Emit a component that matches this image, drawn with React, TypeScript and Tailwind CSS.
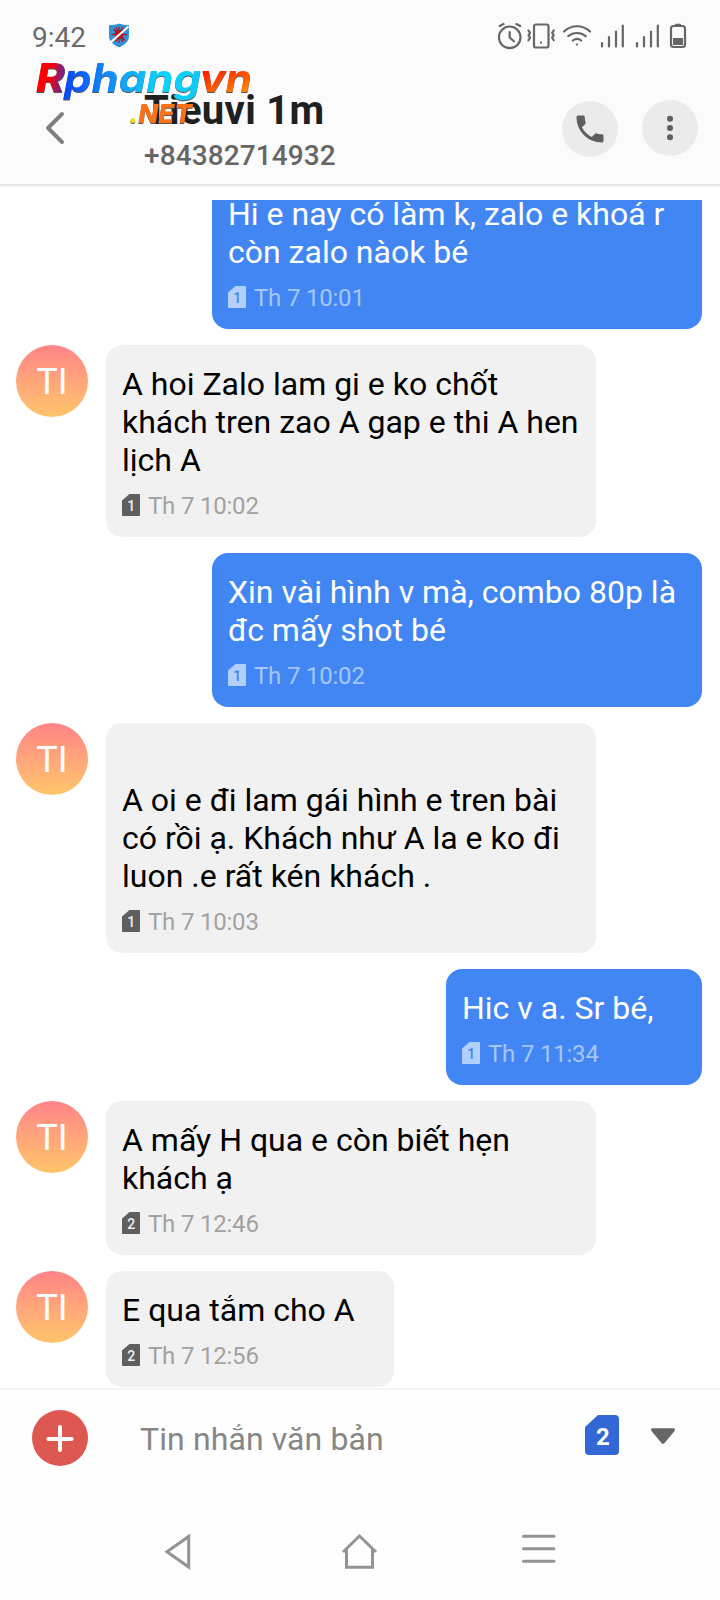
type Message = {
  text: string;
  time: string;
  sim: number;
  mine: boolean;
  width: string;
};

const messages: Message[] = [
  {
    text: "Hi e nay có làm k, zalo e khoá r\ncòn zalo nàok bé",
    time: "Th 7 10:01",
    sim: 1,
    mine: true,
    width: "w-[490px]",
  },
  {
    text: "A hoi Zalo lam gi e ko chốt\nkhách tren zao A gap e thi A hen\nlịch A",
    time: "Th 7 10:02",
    sim: 1,
    mine: false,
    width: "w-[490px]",
  },
  {
    text: "Xin vài hình v mà, combo 80p là\nđc mấy shot bé",
    time: "Th 7 10:02",
    sim: 1,
    mine: true,
    width: "w-[490px]",
  },
  {
    text: "\nA oi e đi lam gái hình e tren bài\ncó rồi ạ. Khách như A la e ko đi\nluon .e rất kén khách .",
    time: "Th 7 10:03",
    sim: 1,
    mine: false,
    width: "w-[490px]",
  },
  {
    text: "Hic v a. Sr bé,",
    time: "Th 7 11:34",
    sim: 1,
    mine: true,
    width: "w-[256px]",
  },
  {
    text: "A mấy H qua e còn biết hẹn\nkhách ạ",
    time: "Th 7 12:46",
    sim: 2,
    mine: false,
    width: "w-[490px]",
  },
  {
    text: "E qua tắm cho A",
    time: "Th 7 12:56",
    sim: 2,
    mine: false,
    width: "w-[288px]",
  },
];

const ShieldIcon = () => (
  <svg className="ml-[21px] mt-[22px]" width="24" height="27" viewBox="0 0 24 27">
    <path
      d="M12 1c3 1.200 6.500 1.600 10.500 1.600V14c0 5.500-4.500 9-10.500 12C6 23 1.500 19.500 1.500 14V2.600C5.500 2.600 9 2.200 12 1z"
      fill="#3290d8"
      stroke="#fff"
      strokeWidth="1"
    />
    <g stroke="#a3121c" strokeWidth="1.200" strokeLinecap="round">
      <path d="M12 5v15M5 12.500h14.500M7 7.500l10.500 10.500M17.500 7L7 18M9 5.500l6.500 14M15.500 5.500L9 19.500" />
    </g>
    <circle cx="12" cy="12.500" r="4.600" fill="#b5121b" />
    <path d="M3.500 20.500L21.500 4.500" stroke="#fff" strokeWidth="2.200" />
  </svg>
);

const StatusIcons = () => (
  <svg
    className="ml-auto mr-[32px] mt-[22px]"
    width="190"
    height="28"
    viewBox="498 22 190 28"
    fill="none"
    stroke="#666"
    strokeWidth="2.200"
    strokeLinecap="round"
    strokeLinejoin="round"
  >
    {/* alarm */}
    <circle cx="509.700" cy="37.300" r="10.800" />
    <path d="M509.700 32v5.500l4.200 3.800M499.700 26l3.800-1.900M520.200 26l-3.800-1.900" />
    {/* vibrate */}
    <rect x="534" y="24.500" width="14.500" height="23" rx="2" />
    <path d="M541 42.500v.2M528.500 30.500l1.500 2.400-1.500 2.400 1.500 2.400-1.500 2.600M553.700 30.500l-1.500 2.400 1.500 2.400-1.500 2.400 1.500 2.600" />
    {/* wifi */}
    <path d="M564 31.500c7.500-7 18.500-7 26 0M568.300 36.200c5-4.300 12.400-4.300 17.400 0M572.800 40.500c2.600-2 5.800-2 8.400 0M577 44.500v.1" />
    {/* signal */}
    <path d="M602 43v3.500M609 37v9.500M616 31.500v15M622.800 25.500v21M637 43v3.500M644 37v9.500M651 31.500v15M657.800 25.500v21" />
    {/* battery */}
    <rect x="671" y="26" width="14" height="21" rx="2.500" />
    <path d="M676 24.800h4" />
    <path d="M673 38h10v7h-10z" fill="#666" stroke="none" />
  </svg>
);

const Watermark = () => (
  <svg
    className="absolute left-[30px] top-[56px]"
    width="230"
    height="74"
    viewBox="30 56 230 74"
    fontFamily="Inter, 'Liberation Sans', sans-serif"
    fontWeight="700"
    fontStyle="italic"
  >
    <defs>
      <linearGradient id="wm-r" x1="0" x2="1" y1="0" y2="0.200">
        <stop offset="0.550" stopColor="#fb0007" />
        <stop offset="1" stopColor="#5a2ba0" />
      </linearGradient>
      <linearGradient id="wm-phang" x1="0" x2="1">
        <stop offset="0" stopColor="#0a45f5" />
        <stop offset="0.450" stopColor="#12a4fb" />
        <stop offset="0.700" stopColor="#08d4fc" />
        <stop offset="1" stopColor="#13c9f5" />
      </linearGradient>
      <linearGradient id="wm-vn" x1="0" x2="0.400" y1="0" y2="1">
        <stop offset="0.300" stopColor="#fb1500" />
        <stop offset="1" stopColor="#ff8a00" />
      </linearGradient>
    </defs>
    <g style={{ filter: "drop-shadow(0.5px 1px 0 #555)" }}>
      <text x="36" y="92" fontSize="39" fontWeight="800" textLength="29" lengthAdjust="spacingAndGlyphs" fill="url(#wm-r)">
        R
      </text>
      <text x="64" y="92" fontSize="39" textLength="137" lengthAdjust="spacingAndGlyphs" fill="url(#wm-phang)">
        phang
      </text>
      <text x="200" y="92" fontSize="38" textLength="52" lengthAdjust="spacingAndGlyphs" fill="url(#wm-vn)">
        vn
      </text>
      <text x="129" y="122.500" fontSize="26" fontWeight="800" textLength="63" lengthAdjust="spacingAndGlyphs" fill="#fb7216">
        <tspan fill="#f3dc10">.</tspan>NET
      </text>
    </g>
  </svg>
);

const SimIcon = ({ sim, mine }: { sim: number; mine: boolean }) => (
  <svg className="-mt-0.5" width="18" height="22" viewBox="0 0 18 22">
    <path
      d="M7.500 0H17q1 0 1 1v20q0 1-1 1H1q-1 0-1-1V6.500z"
      fill={mine ? "#b3cffb" : "#5f5f5f"}
    />
    <text
      x="9.200"
      y="16.500"
      textAnchor="middle"
      fontSize="14"
      fontWeight="500"
      fill={mine ? "#4286f3" : "#f1f1f1"}
    >
      {sim}
    </text>
  </svg>
);

const Bubble = ({ message }: { message: Message }) => {
  const { text, time, sim, mine, width } = message;
  return (
    <div className={mine ? "flex shrink-0 justify-end" : "flex shrink-0"}>
      {!mine && (
        <div className="mr-[18px] flex h-[72px] w-[72px] items-center justify-center rounded-full bg-linear-to-b from-[#ff8387] to-[#ffc569] pt-0.5 text-[36px] leading-none text-white">
          TI
        </div>
      )}
      <div
        className={`${width} rounded-[16px] px-4 pt-5 pb-[17px] ${
          mine ? "bg-[#4286f3] text-white" : "bg-[#f1f1f1] text-black"
        }`}
      >
        <p className="whitespace-pre text-[32px] leading-[38px]">{text}</p>
        <div className="mt-[13px] flex h-7 items-center gap-2">
          <SimIcon sim={sim} mine={mine} />
          <span
            className={`text-[24px] leading-7 tracking-[-0.2px] ${
              mine ? "text-[#a6c6fa]" : "text-[#a2a2a2]"
            }`}
          >
            {time}
          </span>
        </div>
      </div>
    </div>
  );
};

const App = () => {
  return (
    <main className="relative flex h-[1600px] w-[720px] flex-col overflow-hidden bg-white font-['Roboto','Noto_Sans',sans-serif]">
      <header className="h-[184px] shrink-0 bg-[#fbfbfb]">
        <div className="flex h-[84px] pl-[32px]">
          <span className="mt-[21px] text-[28px] leading-[34px] text-[#6b6b6b]">
            9:42
          </span>
          <ShieldIcon />
          <StatusIcons />
        </div>
        <div className="flex h-[100px]">
          <svg
            className="ml-[44px] mt-[26px]"
            width="22"
            height="36"
            viewBox="0 0 22 36"
            fill="none"
            stroke="#808080"
            strokeWidth="4"
            strokeLinecap="round"
            strokeLinejoin="round"
          >
            <path d="M18 4L4 18l14 14" />
          </svg>
          <div className="ml-[78px] flex-1">
            <h1 className="mt-1 text-[40px] font-bold leading-[46px] tracking-[0.3px] text-[#202020]">
              Tieuvi 1m
            </h1>
            <p className="mt-[5px] text-[28px] font-medium leading-[34px] tracking-[0.1px] text-[#666]">
              +84382714932
            </p>
          </div>
          <div className="mr-[22px] mt-4 flex gap-6">
            <button className="mt-px flex h-14 w-14 items-center justify-center rounded-full bg-[#ebebeb]">
              <svg width="36" height="36" viewBox="0 0 24 24" fill="#5f5f5f">
                <path d="M6.620 10.790c1.440 2.830 3.760 5.140 6.590 6.590l2.200-2.200c.27-.27.67-.36 1.020-.24 1.120.37 2.330.57 3.570.57.55 0 1 .45 1 1V20c0 .55-.45 1-1 1-9.390 0-17-7.610-17-17 0-.55.45-1 1-1h3.500c.55 0 1 .45 1 1 0 1.250.2 2.450.57 3.570.11.35.03.74-.25 1.020l-2.200 2.200z" />
              </svg>
            </button>
            <button className="flex h-14 w-14 items-center justify-center rounded-full bg-[#ebebeb]">
              <svg width="8" height="28" viewBox="0 0 8 28" fill="#5f5f5f">
                <circle cx="4" cy="4.700" r="3" />
                <circle cx="4" cy="14" r="3" />
                <circle cx="4" cy="23.300" r="3" />
              </svg>
            </button>
          </div>
        </div>
      </header>
      <div className="h-[3px] shrink-0 bg-linear-to-b from-[#dedede] to-[#f6f6f6]" />

      <section className="mt-[13px] flex h-[1188px] shrink-0 flex-col justify-end gap-4 overflow-hidden pb-px pl-4 pr-[18px]">
        {messages.map((message, i) => (
          <Bubble key={i} message={message} />
        ))}
      </section>

      <footer className="flex-1 border-t-2 border-[#f5f5f5] bg-[#fefefe]">
        <div className="flex h-24 items-center">
          <button className="ml-8 flex h-14 w-14 items-center justify-center rounded-full bg-[#dd5850]">
            <svg
              width="28"
              height="28"
              viewBox="0 0 28 28"
              stroke="#fff"
              strokeWidth="4"
              strokeLinecap="round"
            >
              <path d="M14 3v23M2.500 15h23" />
            </svg>
          </button>
          <span className="ml-[52px] mt-0.5 flex-1 text-[32px] leading-[38px] tracking-[0.1px] text-[#868686]">
            Tin nhắn văn bản
          </span>
          <svg className="-mt-[6px]" width="34" height="40" viewBox="0 0 34 40">
            <path
              d="M13 0h17q4 0 4 4v32q0 4-4 4H4q-4 0-4-4V12z"
              fill="#3367d6"
            />
            <text
              x="18"
              y="29.500"
              textAnchor="middle"
              fontSize="24"
              fontWeight="700"
              fill="#fff"
            >
              2
            </text>
          </svg>
          <svg className="-mt-1 ml-8 mr-[45px]" width="24" height="16" viewBox="0 0 24 16">
            <path
              d="M1 1h22v1.500L12.500 15h-1L1 2.500z"
              fill="#666"
              stroke="#666"
              strokeWidth="1.500"
              strokeLinejoin="round"
            />
          </svg>
        </div>
        <nav className="mt-[47px] flex h-[38px] items-start pl-[164px] text-[#939393]">
          <svg width="28" height="38" viewBox="0 0 28 38" fill="none" stroke="currentColor" strokeWidth="3">
            <path d="M24.700 3.500v30.500L3 18.800z" />
          </svg>
          <svg className="ml-[149px]" width="38" height="38" viewBox="0 0 38 38" fill="none" stroke="currentColor" strokeWidth="3">
            <path d="M2 19L18.500 3 35 19M5.500 16.500v17.700h26V16.500" />
          </svg>
          <svg className="ml-[143px]" width="34" height="38" viewBox="0 0 34 38" stroke="currentColor" strokeWidth="3" strokeLinecap="round">
            <path d="M1.500 3.200h30.500M1.500 15.700h30.500M1.500 28.200h30.500" />
          </svg>
        </nav>
      </footer>

      <Watermark />
    </main>
  );
};

export default App;
